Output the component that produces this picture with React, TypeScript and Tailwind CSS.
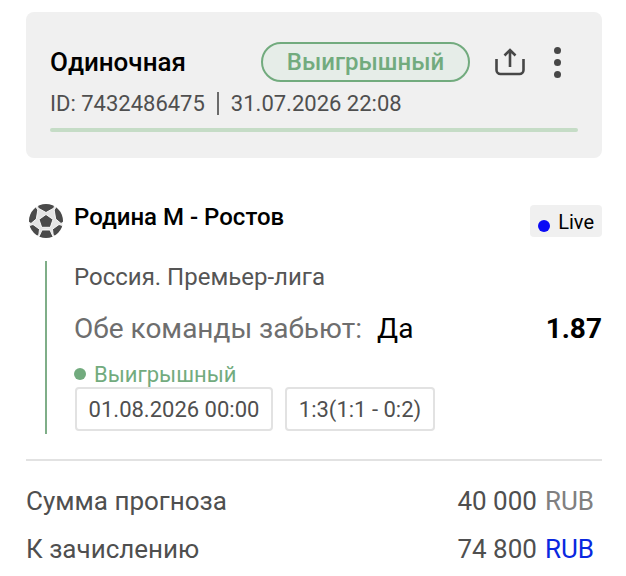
function SoccerBall() {
  return (
    <svg width="34" height="34" viewBox="0 0 34 34" className="ml-[3px] shrink-0">
      <defs>
        <clipPath id="ball">
          <circle cx="17" cy="17" r="17" />
        </clipPath>
      </defs>
      <circle cx="17" cy="17" r="16.5" fill="#e4e4e4" />
      <g clipPath="url(#ball)" fill="#4a4a4a" stroke="#fff" strokeWidth="0.9" strokeLinejoin="round">
        <polygon points="17,10.5 24,15.4 21.3,23.3 12.7,23.3 10,15.4" />
        <polygon points="8,-2 26,-2 25,4 17,8.5 9,4" />
        <polygon points="-2,7 6.5,2.5 8.8,6 7.3,15 2,19.5 -2,17" />
        <polygon points="36,7 27.5,2.5 25.2,6 26.7,15 32,19.5 36,17" />
        <polygon points="-1,22 4,20.5 10.5,25.2 9.8,31 5,34 -1,28" />
        <polygon points="35,22 30,20.5 23.5,25.2 24.2,31 29,34 35,28" />
        <polygon points="13,26 21,26 25.5,36 8.5,36" />
      </g>
    </svg>
  );
}

function ShareIcon() {
  return (
    <svg width="30" height="28" viewBox="0 0 30 28" fill="none" stroke="#474747" strokeWidth="2.6" className="ml-[25px] shrink-0">
      <path d="M1.5 11 V22 a4 4 0 0 0 4 4 H24.5 a4 4 0 0 0 4 -4 V11" />
      <path d="M15 19 V2 M9.5 7.5 L15 2 L20.5 7.5" />
    </svg>
  );
}

function Row({ label, amount, currency }: { label: string; amount: string; currency: string }) {
  return (
    <div className="flex h-[48px] items-center justify-between pr-2 text-[26px] text-[#4f4f4f]">
      <span>{label}</span>
      <span className="flex">
        {amount}
        <span className={"ml-[8px] " + currency}>RUB</span>
      </span>
    </div>
  );
}

export default function App() {
  return (
    <div className="ml-[2px] h-[576px] overflow-hidden bg-white px-[24px] pt-[12px] font-['Roboto',sans-serif]">
      <div className="h-[146px] rounded-[8px] bg-[#f0f0f0] px-[24px] pt-[30px]">
        <div className="flex h-[40px] items-center">
          <span className="w-[211px] text-[26px] font-medium text-black">Одиночная</span>
          <span className="flex h-[40px] w-[209px] items-center justify-center rounded-full border-2 border-[#72ab7e] bg-[#e6ede8] text-[24px] font-medium text-[#72ab7e]">
            Выигрышный
          </span>
          <ShareIcon />
          <div className="ml-[29px] flex flex-col gap-[5px]">
            <span className="h-[7px] w-[7px] rounded-full bg-[#474747]" />
            <span className="h-[7px] w-[7px] rounded-full bg-[#474747]" />
            <span className="h-[7px] w-[7px] rounded-full bg-[#474747]" />
          </div>
        </div>
        <div className="mt-[5px] flex h-[32px] items-center text-[22px] text-[#4f4f4f]">
          <span>ID: 7432486475</span>
          <span className="mx-[12px] h-[23px] w-[2px] bg-[#6b6b6b]" />
          <span>31.07.2026 22:08</span>
        </div>
        <div className="mt-[9px] h-[4px] rounded-full bg-[#c5dcc6]" />
      </div>

      <div className="mt-[46px] flex h-[40px] items-start">
        <SoccerBall />
        <span className="ml-[11px] -mt-[2px] text-[24px] leading-[30px] font-medium text-black">Родина М - Ростов</span>
        <span className="ml-auto mt-[1px] flex h-[32px] items-center gap-[8px] rounded-[4px] bg-[#f0f0f0] pl-[8px] pr-[8px] text-[20px] text-black">
          <span className="mt-[10px] h-[12px] w-[12px] rounded-full bg-[#0a0af5]" />
          <span className="pt-[1px]">Live</span>
        </span>
      </div>

      <div className="ml-[19px] mt-[18px] h-[173px] border-l-2 border-[#7fae88] pl-[27px]">
        <div className="-mt-[1px] flex h-[32px] items-center text-[24px] text-[#555555]">Россия. Премьер-лига</div>
        <div className="mt-[18px] flex h-[36px] items-center text-[28px]">
          <span className="text-[#6e6e6e]">Обе команды забьют:</span>
          <span className="ml-[15px] text-black">Да</span>
          <span className="ml-auto font-bold text-black">1.87</span>
        </div>
        <div className="mt-[14px] flex h-[26px] items-center text-[22px] text-[#72ab7e]">
          <span className="mr-[8px] h-[12px] w-[12px] rounded-full bg-[#72ab7e]" />
          Выигрышный
        </div>
        <div className="ml-[1px] flex gap-[12px]">
          <span className="flex h-[44px] w-[198px] items-center justify-center rounded-[4px] border-2 border-[#e2e2e2] text-[22px] text-[#4f4f4f]">
            01.08.2026 00:00
          </span>
          <span className="flex h-[44px] w-[150px] items-center justify-center rounded-[4px] border-2 border-[#e2e2e2] text-[22px] text-[#4f4f4f]">
            1:3(1:1 - 0:2)
          </span>
        </div>
      </div>

      <div className="mt-[25px] h-[2px] bg-[#e2e2e2]" />
      <div className="mt-[16px]">
        <Row label="Сумма прогноза" amount="40 000" currency="text-[#808080]" />
        <Row label="К зачислению" amount="74 800" currency="text-[#0a28e0]" />
      </div>
    </div>
  );
}
